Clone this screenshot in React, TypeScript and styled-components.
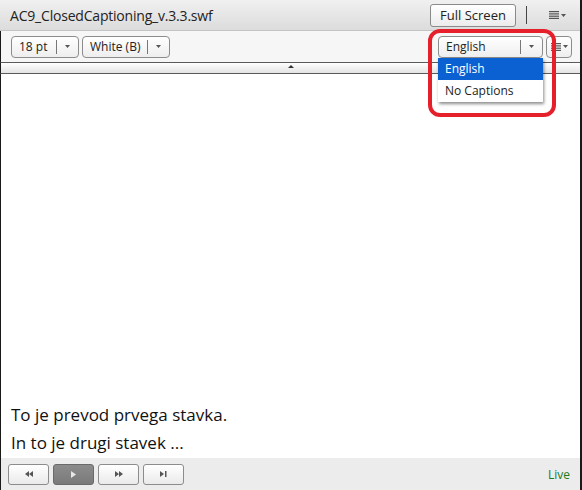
import React from 'react'
import styled, { createGlobalStyle } from 'styled-components'

const GlobalStyle = createGlobalStyle`
  html, body {
    margin: 0;
    padding: 0;
    background: #ffffff;
  }
  body {
    font-family: "Open Sans", "Noto Sans", sans-serif;
    color: #111;
  }
`

const App: React.FC = () => {
  return (
    <>
      <GlobalStyle />
      <Pod>
        <TitleBar>
          <Title>AC9_ClosedCaptioning_v.3.3.swf</Title>
          <TitleTools>
            <PlainButton>Full Screen</PlainButton>
            <VSep />
            <MenuGlyph>
              <Bars />
              <Caret />
            </MenuGlyph>
          </TitleTools>
        </TitleBar>
        <Toolbar>
          <Select width={68}>
            <SelectLabel>18 pt</SelectLabel>
            <SelectArrow><Caret /></SelectArrow>
          </Select>
          <Select width={88}>
            <SelectLabel>White (B)</SelectLabel>
            <SelectArrow><Caret /></SelectArrow>
          </Select>
          <Spacer />
          <LangWrap>
            <Select width={105}>
              <SelectLabel>English</SelectLabel>
              <SelectArrow><Caret /></SelectArrow>
            </Select>
            <Menu>
              <MenuItem active>English</MenuItem>
              <MenuItem>No Captions</MenuItem>
            </Menu>
            <Highlight />
          </LangWrap>
          <IconSelect>
            <Bars />
            <Caret />
          </IconSelect>
        </Toolbar>
        <Collapse>
          <UpTri />
        </Collapse>
        <Stage>
          <Caption>To je prevod prvega stavka.</Caption>
          <Caption>In to je drugi stavek ...</Caption>
        </Stage>
        <Controls>
          <CtrlButton>
            <svg width="8" height="6" viewBox="0 0 8 6"><path d="M4 0L0 3L4 6Z M8 0L4 3L8 6Z" fill="#555" /></svg>
          </CtrlButton>
          <CtrlButton pressed>
            <svg width="5" height="7" viewBox="0 0 5 7"><path d="M0 0L5 3.5L0 7Z" fill="#e8e8e8" /></svg>
          </CtrlButton>
          <CtrlButton>
            <svg width="8" height="6" viewBox="0 0 8 6"><path d="M0 0L4 3L0 6Z M4 0L8 3L4 6Z" fill="#555" /></svg>
          </CtrlButton>
          <CtrlButton>
            <svg width="7" height="6" viewBox="0 0 7 6"><path d="M0 0L4 3L0 6Z" fill="#555" /><rect x="5" y="0" width="1.5" height="6" fill="#555" /></svg>
          </CtrlButton>
          <Spacer />
          <Live>Live</Live>
        </Controls>
      </Pod>
    </>
  )
}

export default App

const Pod = styled.div`
  width: 582px;
  height: 490px;
  display: flex;
  flex-direction: column;
  box-sizing: border-box;
  border-right: 2px solid #1a1a1a;
  position: relative;
  overflow: hidden;
`

const TitleBar = styled.div`
  height: 31px;
  box-sizing: border-box;
  display: flex;
  align-items: center;
  padding: 0 14px 0 10px;
  background: linear-gradient(#f0f0f0, #dcdcdc);
  border-bottom: 1px solid #c4c4c4;
`

const Title = styled.div`
  font-size: 14px;
  color: #222;
  letter-spacing: -0.2px;
`

const TitleTools = styled.div`
  margin-left: auto;
  display: flex;
  align-items: center;
  gap: 10px;
`

const PlainButton = styled.button`
  height: 23px;
  width: 86px;
  padding: 0;
  font-family: inherit;
  font-size: 13px;
  color: #222;
  border: 1px solid #8a8a8a;
  border-radius: 3px;
  background: linear-gradient(#ffffff, #ececec);
`

const VSep = styled.div`
  width: 1px;
  height: 18px;
  background: #444;
  margin-right: 12px;
`

const MenuGlyph = styled.div`
  display: flex;
  align-items: center;
  gap: 2px;
`

const Bars = () => (
  <svg width="10" height="8" viewBox="0 0 10 8">
    <rect x="0" y="0" width="10" height="1.2" fill="#555" />
    <rect x="0" y="2.3" width="10" height="1.2" fill="#555" />
    <rect x="0" y="4.6" width="10" height="1.2" fill="#555" />
    <rect x="0" y="6.8" width="10" height="1.2" fill="#555" />
  </svg>
)

const Caret = () => (
  <svg width="5" height="3" viewBox="0 0 5 3">
    <path d="M0 0H5L2.5 3Z" fill="#555" />
  </svg>
)

const Toolbar = styled.div`
  height: 31px;
  box-sizing: border-box;
  display: flex;
  align-items: center;
  gap: 3px;
  padding: 0 8px 0 10px;
  background: #f6f6f6;
  border-left: 1px solid #1a1a1a;
`

const Select = styled.div<{ width: number }>`
  width: ${({ width }) => width}px;
  height: 22px;
  box-sizing: border-box;
  display: flex;
  align-items: center;
  border: 1px solid #8c8c8c;
  border-radius: 4px;
  background: linear-gradient(#ffffff, #eeeeee);
`

const SelectLabel = styled.div`
  flex: 1;
  padding-left: 7px;
  font-size: 12px;
  color: #222;
  border-right: 1px solid #777;
  height: 14px;
  line-height: 14px;
`

const SelectArrow = styled.div`
  width: 21px;
  display: flex;
  justify-content: center;
  align-items: center;
`

const Spacer = styled.div`
  flex: 1;
`

const LangWrap = styled.div`
  position: relative;
`

const Menu = styled.div`
  position: absolute;
  left: 0;
  top: 22px;
  width: 105px;
  background: #fff;
  box-shadow: 1px 2px 3px rgba(0, 0, 0, 0.45);
  z-index: 2;
`

const MenuItem = styled.div<{ active?: boolean }>`
  height: 22px;
  line-height: 22px;
  padding-left: 7px;
  font-size: 12px;
  color: ${({ active }) => (active ? '#fff' : '#222')};
  background: ${({ active }) => (active ? '#0b60d2' : '#fff')};
`

const Highlight = styled.div`
  position: absolute;
  left: -10px;
  top: -7px;
  width: 128px;
  height: 88px;
  box-sizing: border-box;
  border: 4px solid #e5202a;
  border-radius: 12px;
  z-index: 3;
`

const IconSelect = styled.div`
  width: 26px;
  height: 22px;
  box-sizing: border-box;
  display: flex;
  align-items: center;
  justify-content: center;
  gap: 2px;
  border: 1px solid #8c8c8c;
  border-radius: 4px;
  background: linear-gradient(#ffffff, #eeeeee);
`

const Collapse = styled.div`
  height: 12px;
  box-sizing: border-box;
  border-top: 1px solid #5a5a5a;
  border-bottom: 1px solid #5a5a5a;
  border-left: 1px solid #1a1a1a;
  background: linear-gradient(#ffffff, #e4e4e4);
  display: flex;
  justify-content: center;
  align-items: center;
`

const UpTri = styled.div`
  width: 0;
  height: 0;
  border-left: 3px solid transparent;
  border-right: 3px solid transparent;
  border-bottom: 3px solid #333;
  margin-bottom: 3px;
`

const Stage = styled.div`
  flex: 1;
  background: #fff;
  border-left: 1px solid #1a1a1a;
  display: flex;
  flex-direction: column;
  justify-content: flex-end;
  padding: 0 0 1px 10px;
`

const Caption = styled.div`
  font-size: 17px;
  line-height: 28px;
  color: #111;
`

const Controls = styled.div`
  height: 32px;
  box-sizing: border-box;
  display: flex;
  align-items: center;
  gap: 4px;
  padding: 0 10px 0 7px;
  background: #ececec;
  border-left: 1px solid #1a1a1a;
`

const CtrlButton = styled.div<{ pressed?: boolean }>`
  width: 41px;
  height: 21px;
  box-sizing: border-box;
  display: flex;
  align-items: center;
  justify-content: center;
  border: 1px solid ${({ pressed }) => (pressed ? '#6a6a6a' : '#8c8c8c')};
  border-radius: 3px;
  background: ${({ pressed }) =>
    pressed ? 'linear-gradient(#8c8c8c, #7a7a7a)' : 'linear-gradient(#ffffff, #eaeaea)'};
`

const Live = styled.div`
  font-size: 12px;
  color: #1d7a1d;
`
